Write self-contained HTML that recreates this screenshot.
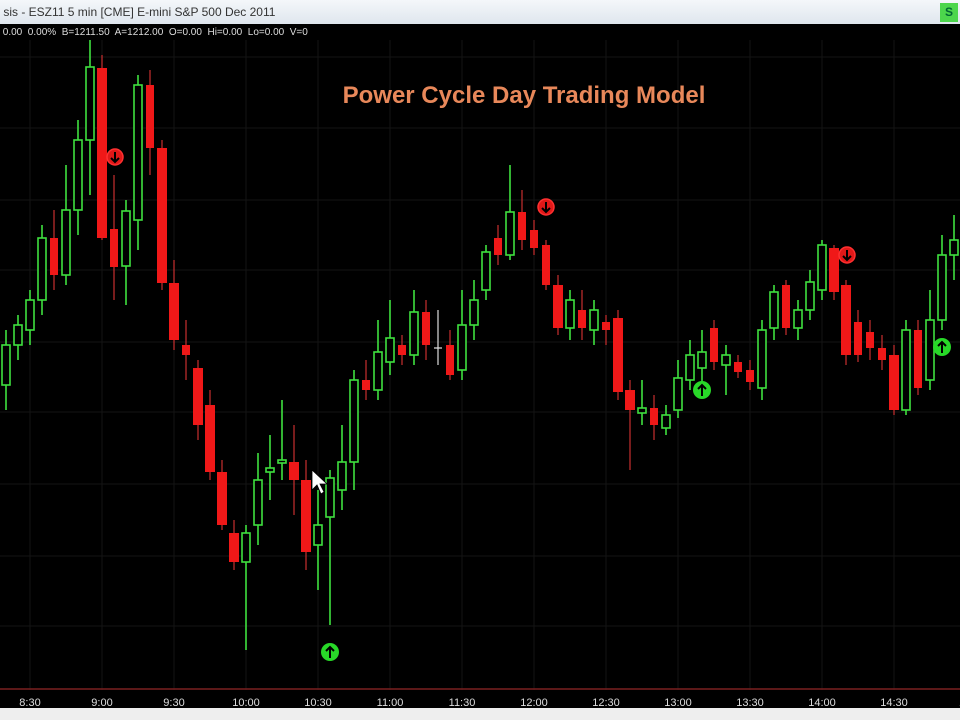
<!DOCTYPE html>
<html><head><meta charset="utf-8"><style>
html,body{margin:0;padding:0;width:960px;height:720px;overflow:hidden;background:#000;font-family:"Liberation Sans",sans-serif}
.tb{position:absolute;left:0;top:0;width:960px;height:24px;background:linear-gradient(#f4f7fa,#dfe6ee);color:#333;font-size:12px;line-height:24px}
.s{position:absolute;left:940px;top:3px;width:18px;height:19px;background:#4cd64c;color:#063;font-weight:bold;font-size:12px;text-align:center;line-height:19px}
.info{position:absolute;left:0;top:27px;color:#ddd;font-size:10px;font-family:"Liberation Sans",sans-serif}
.bot{position:absolute;left:0;top:708px;width:960px;height:12px;background:#eee}
</style></head><body>
<svg width="960" height="720" style="position:absolute;left:0;top:0">
<g stroke="#141414" stroke-width="1">
<line x1="30" y1="40" x2="30" y2="690"/><line x1="102" y1="40" x2="102" y2="690"/><line x1="174" y1="40" x2="174" y2="690"/><line x1="246" y1="40" x2="246" y2="690"/><line x1="318" y1="40" x2="318" y2="690"/><line x1="390" y1="40" x2="390" y2="690"/><line x1="462" y1="40" x2="462" y2="690"/><line x1="534" y1="40" x2="534" y2="690"/><line x1="606" y1="40" x2="606" y2="690"/><line x1="678" y1="40" x2="678" y2="690"/><line x1="750" y1="40" x2="750" y2="690"/><line x1="822" y1="40" x2="822" y2="690"/><line x1="894" y1="40" x2="894" y2="690"/>
<line x1="0" y1="57" x2="960" y2="57"/><line x1="0" y1="128" x2="960" y2="128"/><line x1="0" y1="200" x2="960" y2="200"/><line x1="0" y1="270" x2="960" y2="270"/><line x1="0" y1="342" x2="960" y2="342"/><line x1="0" y1="412" x2="960" y2="412"/><line x1="0" y1="484" x2="960" y2="484"/><line x1="0" y1="556" x2="960" y2="556"/><line x1="0" y1="626" x2="960" y2="626"/>
</g>
<line x1="0" y1="689" x2="960" y2="689" stroke="#7a2020" stroke-width="1.5"/>
<g stroke="#3ee03e" stroke-width="1.6" fill="none">
<path d="M6 330V410M18 315V360M30 290V345M42 225V315M66 165V285M78 120V235M90 40V195M126 200V305M138 75V250M246 525V650M258 453V545M270 435V500M282 400V480M318 490V590M330 470V625M342 425V510M354 370V490M378 320V400M390 300V375M414 290V365M462 290V380M474 280V340M486 245V300M510 165V260M570 290V340M594 300V345M642 380V425M666 405V435M678 360V418M690 340V390M702 330V385M726 345V395M762 320V400M774 285V340M798 300V340M810 270V320M822 240V300M906 320V415M930 290V390M942 235V330M954 215V280"/>
<rect x="2" y="345" width="8" height="40" fill="#000"/><rect x="14" y="325" width="8" height="20" fill="#000"/><rect x="26" y="300" width="8" height="30" fill="#000"/><rect x="38" y="238" width="8" height="62" fill="#000"/><rect x="62" y="210" width="8" height="65" fill="#000"/><rect x="74" y="140" width="8" height="70" fill="#000"/><rect x="86" y="67" width="8" height="73" fill="#000"/><rect x="122" y="211" width="8" height="55" fill="#000"/><rect x="134" y="85" width="8" height="135" fill="#000"/>
<rect x="242" y="533" width="8" height="29" fill="#000"/><rect x="254" y="480" width="8" height="45" fill="#000"/><rect x="266" y="468" width="8" height="4" fill="#000"/><rect x="278" y="460" width="8" height="3" fill="#000"/><rect x="314" y="525" width="8" height="20" fill="#000"/><rect x="326" y="478" width="8" height="39" fill="#000"/><rect x="338" y="462" width="8" height="28" fill="#000"/><rect x="350" y="380" width="8" height="82" fill="#000"/>
<rect x="374" y="352" width="8" height="38" fill="#000"/><rect x="386" y="338" width="8" height="24" fill="#000"/><rect x="410" y="312" width="8" height="43" fill="#000"/><rect x="458" y="325" width="8" height="45" fill="#000"/><rect x="470" y="300" width="8" height="25" fill="#000"/><rect x="482" y="252" width="8" height="38" fill="#000"/><rect x="506" y="212" width="8" height="43" fill="#000"/><rect x="566" y="300" width="8" height="28" fill="#000"/><rect x="590" y="310" width="8" height="20" fill="#000"/>
<rect x="638" y="408" width="8" height="5" fill="#000"/><rect x="662" y="415" width="8" height="13" fill="#000"/><rect x="674" y="378" width="8" height="32" fill="#000"/><rect x="686" y="355" width="8" height="25" fill="#000"/><rect x="698" y="352" width="8" height="16" fill="#000"/><rect x="722" y="355" width="8" height="10" fill="#000"/><rect x="758" y="330" width="8" height="58" fill="#000"/><rect x="770" y="292" width="8" height="36" fill="#000"/><rect x="794" y="310" width="8" height="18" fill="#000"/><rect x="806" y="282" width="8" height="28" fill="#000"/><rect x="818" y="245" width="8" height="45" fill="#000"/><rect x="902" y="330" width="8" height="80" fill="#000"/><rect x="926" y="320" width="8" height="60" fill="#000"/><rect x="938" y="255" width="8" height="65" fill="#000"/><rect x="950" y="240" width="8" height="15" fill="#000"/>
</g>
<g stroke="#c83030" stroke-width="1.2"><path d="M54 210V290M102 55V240M114 175V300M150 70V175M162 140V290M174 260V350M186 320V380M198 360V440M210 390V480M222 460V530M234 520V570M294 425V515M306 460V570M366 360V400M402 335V365M426 300V360M450 330V380M498 225V265M522 190V250M534 220V255M546 240V290M558 275V335M582 290V340M606 315V345M618 310V400M630 380V470M654 395V440M714 320V370M738 355V378M750 360V390M786 280V335M834 245V300M846 280V365M858 310V362M870 320V360M882 335V370M894 345V415M918 320V395"/></g>
<g fill="#f01818">
<rect x="50" y="238" width="8" height="37"/><rect x="97" y="68" width="10" height="170"/><rect x="110" y="229" width="8" height="38"/><rect x="146" y="85" width="8" height="63"/><rect x="157" y="148" width="10" height="135"/><rect x="169" y="283" width="10" height="57"/><rect x="182" y="345" width="8" height="10"/><rect x="193" y="368" width="10" height="57"/><rect x="205" y="405" width="10" height="67"/><rect x="217" y="472" width="10" height="53"/><rect x="229" y="533" width="10" height="29"/><rect x="289" y="462" width="10" height="18"/><rect x="301" y="480" width="10" height="72"/><rect x="362" y="380" width="8" height="10"/><rect x="398" y="345" width="8" height="10"/><rect x="422" y="312" width="8" height="33"/><rect x="446" y="345" width="8" height="30"/><rect x="494" y="238" width="8" height="17"/><rect x="518" y="212" width="8" height="28"/><rect x="530" y="230" width="8" height="18"/><rect x="542" y="245" width="8" height="40"/><rect x="553" y="285" width="10" height="43"/><rect x="578" y="310" width="8" height="18"/><rect x="602" y="322" width="8" height="8"/><rect x="613" y="318" width="10" height="74"/><rect x="625" y="390" width="10" height="20"/><rect x="650" y="408" width="8" height="17"/><rect x="710" y="328" width="8" height="34"/><rect x="734" y="362" width="8" height="10"/><rect x="746" y="370" width="8" height="12"/><rect x="782" y="285" width="8" height="43"/><rect x="829" y="248" width="10" height="44"/><rect x="841" y="285" width="10" height="70"/><rect x="854" y="322" width="8" height="33"/><rect x="866" y="332" width="8" height="16"/><rect x="878" y="348" width="8" height="12"/><rect x="889" y="355" width="10" height="55"/><rect x="914" y="330" width="8" height="58"/>
</g>
<path d="M438 310V365M434 348H442" stroke="#ddd" stroke-width="1.2"/>
<g fill="#e01818" stroke="#ff3030" stroke-width="1.5">
<circle cx="115" cy="157" r="8"/><circle cx="546" cy="207" r="8"/><circle cx="847" cy="255" r="8"/></g>
<g stroke="#000" stroke-width="2" fill="none"><path d="M115 152V162M111 158L115 162L119 158M546 202V212M542 208L546 212L550 208M847 250V260M843 256L847 260L851 256"/></g>
<g fill="#28d828"><circle cx="330" cy="652" r="9"/><circle cx="702" cy="390" r="9"/><circle cx="942" cy="347" r="9"/></g>
<g stroke="#000" stroke-width="2" fill="none"><path d="M330 658V647M326 651L330 647L334 651M702 396V385M698 389L702 385L706 389M942 353V342M938 346L942 342L946 346"/></g>
<path d="M312 470L312 490L317 485L321 494L324 492L320 484L327 484Z" fill="#fff" stroke="#000" stroke-width="0.8"/>
<text x="524" y="103" text-anchor="middle" font-family="Liberation Sans, sans-serif" font-weight="bold" font-size="24" fill="#e8885a">Power Cycle Day Trading Model</text>
<g font-family="Liberation Sans, sans-serif" font-size="11" fill="#ddd" text-anchor="middle">
<text x="30" y="706">8:30</text><text x="102" y="706">9:00</text><text x="174" y="706">9:30</text><text x="246" y="706">10:00</text><text x="318" y="706">10:30</text><text x="390" y="706">11:00</text><text x="462" y="706">11:30</text><text x="534" y="706">12:00</text><text x="606" y="706">12:30</text><text x="678" y="706">13:00</text><text x="750" y="706">13:30</text><text x="822" y="706">14:00</text><text x="894" y="706">14:30</text><text x="962" y="706">1</text>
</g>
</svg>
<div class="tb">&nbsp;sis - ESZ11 5 min [CME] E-mini S&amp;P 500 Dec 2011</div>
<div class="s">S</div>
<div class="info">&nbsp;0.00&nbsp; 0.00%&nbsp; B=1211.50&nbsp; A=1212.00&nbsp; O=0.00&nbsp; Hi=0.00&nbsp; Lo=0.00&nbsp; V=0</div>
<div class="bot"></div>
</body></html>
